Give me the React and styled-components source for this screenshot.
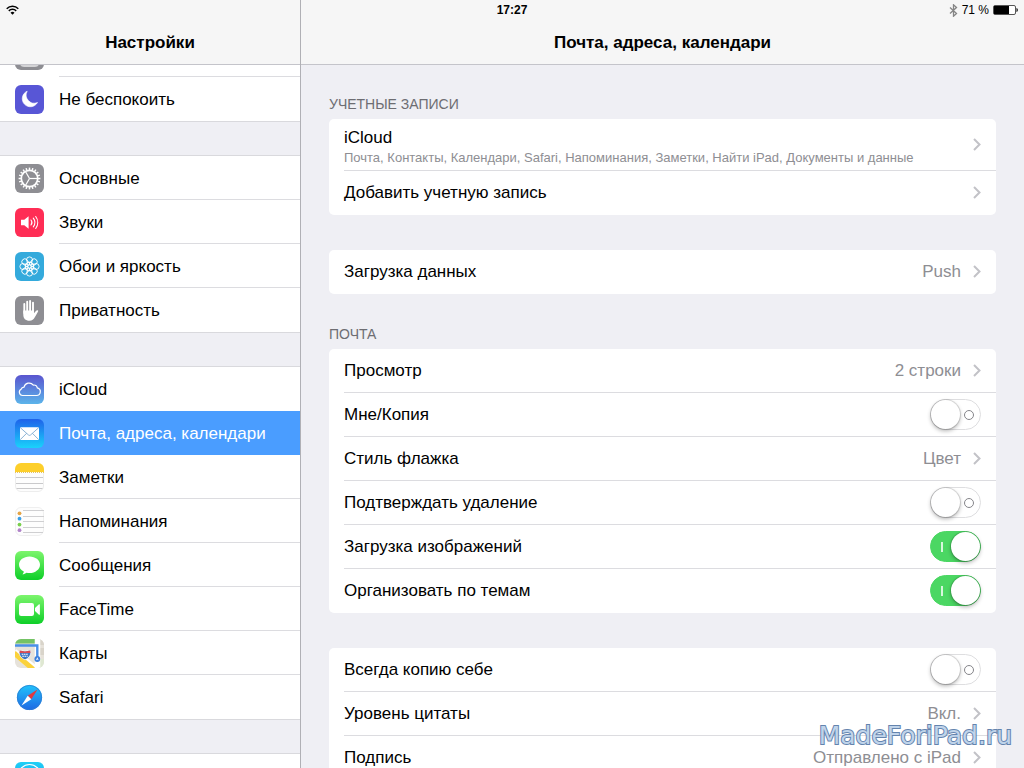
import React, { useId, useState } from "react";
import styled, { createGlobalStyle, css } from "styled-components";

const GlobalStyle = createGlobalStyle`
  *,
  *::before,
  *::after {
    box-sizing: border-box;
  }

  html,
  body,
  #root {
    height: 100%;
    margin: 0;
  }

  body {
    overflow: hidden;
    background: #efeff4;
    color: #000;
    font-family: "Liberation Sans", Arial, sans-serif;
    font-size: 17px;
    line-height: 20px;
  }

  ul {
    margin: 0;
    padding: 0;
    list-style: none;
  }
`;

const Screen = styled.div`
  position: relative;
  display: flex;
  height: 100%;
  overflow: hidden;
`;

/* ---------- status bar ---------- */

const StatusBar = styled.div`
  position: absolute;
  top: 0;
  right: 0;
  left: 0;
  z-index: 3;
  display: grid;
  grid-template-columns: 1fr auto 1fr;
  align-items: center;
  height: 20px;
  padding: 0 6px;
  font-size: 12px;
  line-height: 20px;
`;

const Clock = styled.time`
  font-weight: bold;
`;

const StatusRight = styled.div`
  display: flex;
  align-items: center;
  justify-content: flex-end;
  gap: 4px;
`;

/* ---------- panes ---------- */

const Pane = styled.section`
  display: flex;
  flex-direction: column;
  min-width: 0;
  ${(p) =>
    p.$side
      ? css`
          flex: 0 0 301px;
          border-right: 1px solid #b0b0b5;
        `
      : css`
          flex: 1;
        `}
`;

const TitleBar = styled.header`
  position: relative;
  z-index: 2;
  flex: none;
  padding: 33px 0 11px;
  background: #f6f6f6;
  border-bottom: 1px solid #c4c4ca;
`;

const Title = styled.h1`
  margin: 0;
  font-size: 17px;
  line-height: 20px;
  text-align: center;
`;

const Scroller = styled.div`
  flex: 1;
  min-height: 0;
  overflow: hidden;
`;

/* ---------- sidebar ---------- */

const Nav = styled.nav`
  display: flex;
  flex-direction: column;
  gap: 35px;
  margin-top: -32px;
`;

const NavGroup = styled.ul`
  background: #fff;
  box-shadow: 0 -1px #d9d9dd, 0 1px #d9d9dd;
`;

const NavLabel = styled.span`
  flex: 1;
  display: flex;
  align-items: center;
  height: 44px;
  padding-top: 2px;
  border-bottom: 1px solid ${(p) => (p.$line ? "#dcdce0" : "transparent")};
`;

const NavLink = styled.a`
  display: flex;
  align-items: center;
  gap: 15px;
  height: 44px;
  padding-left: 15px;
  background: ${(p) => (p.$active ? "#4a9dff" : "transparent")};
  color: ${(p) => (p.$active ? "#fff" : "#000")};
  text-decoration: none;
`;

const AppIcon = styled.svg`
  flex: none;
  display: block;
  width: 29px;
  height: 29px;
`;

/* ---------- settings ---------- */

const Settings = styled.main`
  display: flex;
  flex-direction: column;
  gap: 35px;
  padding: 30px 28px 0;
`;

const Caption = styled.h2`
  margin: 0 0 6px;
  color: #6d6d72;
  font-size: 14px;
  font-weight: normal;
  line-height: 18px;
  text-transform: uppercase;

  section + section > & {
    margin-top: -4px;
  }
`;

const Card = styled.ul`
  background: #fff;
  border-radius: 5px;
`;

const Row = styled.li`
  padding-left: 15px;
`;

const rowBody = css`
  display: flex;
  align-items: center;
  gap: 12px;
  width: 100%;
  height: ${(p) => (p.$tall ? 52 : 44)}px;
  padding: 0 15px 0 0;
  border: 0;
  border-bottom: 1px solid #dcdce0;
  background: none;
  color: inherit;
  font: inherit;
  text-align: left;

  ${Row}:last-child > & {
    border-bottom-color: transparent;
  }
`;

const RowButton = styled.button`
  ${rowBody}
`;

const RowLabel = styled.label`
  ${rowBody}
`;

const RowText = styled.span`
  flex: 1;
  min-width: 0;
`;

const Detail = styled.span`
  display: block;
  color: #8e8e93;
  font-size: 13px;
`;

const TwoLines = styled(RowText)`
  padding-top: 6px;
`;

const Value = styled.span`
  color: #8e8e93;
`;

const Chevron = styled.svg`
  flex: none;
  width: 8px;
  height: 13px;
`;

const Switch = styled.input`
  position: relative;
  flex: none;
  appearance: none;
  width: 51px;
  height: 31px;
  margin: 0;
  border: 1px solid #dedee0;
  border-radius: 16px;
  background: #fff;

  &::before {
    content: "";
    position: absolute;
    top: 10px;
    right: 6px;
    width: 10px;
    height: 10px;
    border: 1px solid #85858a;
    border-radius: 50%;
  }

  &::after {
    content: "";
    position: absolute;
    top: 0;
    left: 0;
    width: 29px;
    height: 29px;
    border-radius: 50%;
    background: #fff;
    box-shadow: 0 0 0 1px rgba(0, 0, 0, 0.12), 0 2px 4px rgba(0, 0, 0, 0.3);
  }

  &:checked {
    border-color: #4bd763;
    background: #4bd763;
  }

  &:checked::before {
    right: auto;
    left: 10px;
    width: 2px;
    border: 0;
    border-radius: 0;
    background: #d8f7dd;
  }

  &:checked::after {
    right: 0;
    left: auto;
  }
`;

const Watermark = styled.div`
  position: absolute;
  right: 12px;
  bottom: 18px;
  z-index: 4;
  color: #c0d4ea;
  font-family: "DejaVu Sans", sans-serif;
  font-size: 25px;
  line-height: 28px;
  -webkit-text-stroke: 2px #6484ae;
  paint-order: stroke fill;
  pointer-events: none;
`;

/* ---------- icons ---------- */

const around = (n) => Array.from({ length: n }, (_, i) => (i * 360) / n);

function Tile({ from, to = from, children }) {
  const id = useId();
  return (
    <AppIcon viewBox="0 0 29 29" aria-hidden="true">
      <linearGradient id={id} x1="0" y1="0" x2="0" y2="1">
        <stop stopColor={from} />
        <stop offset="1" stopColor={to} />
      </linearGradient>
      <rect width="29" height="29" rx="6" fill={`url(#${id})`} />
      {children}
    </AppIcon>
  );
}

const ControlIcon = () => (
  <Tile from="#8e8e93">
    <rect x="5" y="18" width="19" height="8" rx="4" fill="#d4d4d6" />
  </Tile>
);

const MoonIcon = () => (
  <Tile from="#5856d6">
    <path d="M12.200 6.200a8.100 8.100 0 1 0 10.300 11.300A8.100 8.100 0 0 1 12.200 6.200Z" fill="#fff" stroke="#fff" strokeWidth=".6" strokeLinejoin="round" />
  </Tile>
);

const GearIcon = () => (
  <Tile from="#8e8e93">
    <g stroke="#fff" fill="none">
      <circle cx="14.5" cy="14.5" r="8.200" strokeWidth="1.700" />
      {around(20).map((a) => (
        <path key={a} d="M14.5 3.600v2.400" strokeWidth="1.500" transform={`rotate(${a} 14.5 14.5)`} />
      ))}
      {around(3).map((a) => (
        <path key={a} d="M14.500 14.500h8" strokeWidth="1.200" transform={`rotate(${a} 14.5 14.5)`} />
      ))}
    </g>
  </Tile>
);

const SoundIcon = () => (
  <Tile from="#ff2d55">
    <path d="M6 11.700h3.300l4.300-3.500v12.600l-4.300-3.500H6Z" fill="#fff" />
    <g stroke="#fff" strokeWidth="1.100" fill="none" strokeLinecap="round">
      <path d="M16 12a4 4 0 0 1 0 5" />
      <path d="M18.300 10.200a7 7 0 0 1 0 8.600" />
      <path d="M20.700 8.500a10 10 0 0 1 0 12" />
    </g>
  </Tile>
);

const FlowerIcon = () => (
  <Tile from="#34aadc">
    <g stroke="#fff" strokeWidth=".9" fill="none">
      {around(8).map((a) => (
        <circle key={a} cx="14.500" cy="7.900" r="3" transform={`rotate(${a} 14.5 14.5)`} />
      ))}
      {around(8).map((a) => (
        <circle key={a} cx="14.500" cy="11.300" r="1.500" transform={`rotate(${a + 22.5} 14.5 14.5)`} />
      ))}
      <circle cx="14.500" cy="14.500" r="1.600" />
    </g>
  </Tile>
);

const HandIcon = () => (
  <Tile from="#8e8e93">
    <g stroke="#fff" strokeWidth="1.900" strokeLinecap="round">
      <path d="M9.300 8v9M12.200 5.700v11M15.100 5v11M18 6.600v10" />
    </g>
    <path
      d="M8.300 14.500h10.700v2.700l1.900-2.300c.8-.9 2.400-.7 2.300.1-.7 1.700-2.200 4.400-3.400 6.300-1.200 2.200-2.600 3.500-5.300 3.500-4 0-6.200-2.300-6.200-6Z"
      fill="#fff"
    />
  </Tile>
);

const CloudIcon = () => (
  <Tile from="#5a55cf" to="#5cb4ea">
    <path
      d="M7.500 20.500h14a3.900 3.900 0 0 0 .8-7.700 3.300 3.300 0 0 0-4-2.700 5.300 5.300 0 0 0-9.300 2 3 3 0 0 0-2.900 2.200 3.300 3.300 0 0 0 1.400 6.200Z"
      fill="none"
      stroke="#fff"
      strokeWidth="1.200"
    />
  </Tile>
);

const MailIcon = () => (
  <Tile from="#1e62ea" to="#1ad2fb">
    <rect x="5" y="8.300" width="19" height="12.600" rx="1" fill="#fff" />
    <path
      d="m5.300 8.700 8.200 7.300q1 .8 2 0l8.200-7.300M5.400 20.500l6.200-6.200M23.600 20.500l-6.200-6.200"
      fill="none"
      stroke="#6d9fca"
      strokeWidth=".8"
    />
  </Tile>
);

const NotesIcon = () => (
  <Tile from="#fdfdfd">
    <path d="M0 9V6a6 6 0 0 1 6-6h17a6 6 0 0 1 6 6v3Z" fill="#fdcf2b" />
    <path d="M0 9.500h29" stroke="#d9b23a" strokeWidth=".8" strokeDasharray="1 1" />
    <path d="M0 14.500h29M0 20.500h29M1 25.500h27" stroke="#c9c9cb" />
    <path d="M.5 10v13a5.500 5.500 0 0 0 5.500 5.500h17a5.500 5.500 0 0 0 5.500-5.500V10" fill="none" stroke="#ededed" />
  </Tile>
);

const RemindersIcon = () => (
  <Tile from="#fdfdfd">
    <rect x=".5" y=".5" width="28" height="28" rx="5.500" fill="none" stroke="#efefef" />
    <path d="M8 3.500h21M8 9.500h21M8 14.500h21M8 20.500h21M8 25.500h20" stroke="#cfcfd1" />
    <circle cx="4.500" cy="6.300" r="1.900" fill="#e5a446" />
    <circle cx="4.500" cy="11.700" r="1.900" fill="#3a9fe8" />
    <circle cx="4.500" cy="17.600" r="1.900" fill="#79cf4c" />
    <circle cx="4.500" cy="23.200" r="1.900" fill="#b083c9" />
  </Tile>
);

const MessagesIcon = () => (
  <Tile from="#7df56d" to="#0ecf28">
    <path
      d="M14.500 5.500c5.800 0 10.500 3.600 10.500 8.200s-4.700 8.300-10.500 8.300c-1 0-2-.1-3-.3-1 .9-2.500 1.500-4.200 1.500.9-.7 1.500-1.600 1.500-2.700C5.900 19 4 16.500 4 13.700c0-4.600 4.700-8.200 10.500-8.200Z"
      fill="#fff"
    />
  </Tile>
);

const FaceTimeIcon = () => (
  <Tile from="#7df56d" to="#0ecf28">
    <rect x="4" y="8" width="15" height="13" rx="2.200" fill="#fff" />
    <path d="m20 13 4-3.700c.4-.3.900-.1.900.4v9.600c0 .5-.5.700-.9.400L20 16Z" fill="#fff" />
  </Tile>
);

const MapsIcon = () => (
  <AppIcon viewBox="0 0 29 29" aria-hidden="true">
    <clipPath id="map-clip">
      <rect width="29" height="29" rx="6" />
    </clipPath>
    <g clipPath="url(#map-clip)">
      <rect width="29" height="29" fill="#e6e2da" />
      <path d="M0 0h20v4.500H0Z" fill="#74c365" />
      <path d="M25 0h4v6h-4ZM25 9h4v7h-4Z" fill="#d9d4ca" />
      <path d="M25 20h4v9h-5Z" fill="#dfe8d2" />
      <path d="M-1 13 20 30" stroke="#fff" strokeWidth="7" />
      <path d="M-1 14 19 31" stroke="#fbd23c" strokeWidth="5" />
      <path d="M22.500 0v29" stroke="#fff" strokeWidth="5.500" />
      <path d="M0 6.500h22.300V18" fill="none" stroke="#4a90e8" strokeWidth="2.400" />
      <circle cx="22.300" cy="20" r="2.900" fill="#3b7fdc" />
      <path d="m22.300 18.200 1.400 3.100-1.400-.7-1.400.7Z" fill="#fff" />
      <path d="M4.800 11.500q5.200 1.600 10.400 0c1.600 4-1 7.500-5.200 9.300-4.200-1.800-6.800-5.300-5.200-9.300Z" fill="#3c76c4" stroke="#fff" strokeWidth=".7" />
      <path d="M4.800 11.600q5.200 1.600 10.400 0l.3 2.300h-11Z" fill="#d84a52" />
      <path d="M6.700 15.200h6.600M7.300 17.200h5.400" stroke="#fff" strokeWidth="1.100" strokeDasharray="1.600 .6" />
    </g>
  </AppIcon>
);

const SafariIcon = () => (
  <AppIcon viewBox="0 0 29 29" aria-hidden="true">
    <linearGradient id="safari-sky" x1="0" y1="0" x2="0" y2="1">
      <stop stopColor="#20c4fb" />
      <stop offset="1" stopColor="#1f68e4" />
    </linearGradient>
    <circle cx="14.500" cy="14.500" r="12.600" fill="url(#safari-sky)" />
    <circle cx="14.500" cy="14.500" r="12.100" fill="none" stroke="#2f7fd0" strokeWidth=".8" />
    <path d="M22.500 6.500 12.700 12.700l3.600 3.600Z" fill="#e2383f" />
    <path d="M6.500 22.500 12.700 12.700l3.600 3.600Z" fill="#fff" />
  </AppIcon>
);

const StoreIcon = () => (
  <Tile from="#1fd0f5" to="#1d8df0">
    <circle cx="14.500" cy="13.500" r="11" fill="none" stroke="#fff" strokeWidth="1.200" />
  </Tile>
);

const WifiIcon = () => (
  <svg width="13" height="10" viewBox="0 0 13 10" role="img" aria-label="Wi-Fi">
    <g fill="none" stroke="#000" strokeWidth="1.500">
      <path d="M.7 3.700a8.300 8.300 0 0 1 11.600 0" />
      <path d="M2.800 5.900a5.200 5.200 0 0 1 7.400 0" />
    </g>
    <path d="M4.500 7.700a2.900 2.900 0 0 1 4 0l-2 2Z" />
  </svg>
);

const BluetoothIcon = () => (
  <svg width="9" height="13" viewBox="0 0 9 13" role="img" aria-label="Bluetooth">
    <path
      d="m1 3.500 6.500 6-3 2.700V.8l3 2.700-6.500 6"
      fill="none"
      stroke="#858585"
      strokeWidth="1.300"
    />
  </svg>
);

const BatteryIcon = () => (
  <svg width="25" height="10" viewBox="0 0 25 10" aria-hidden="true">
    <rect x=".5" y=".5" width="22" height="9" rx="1.500" fill="#fff" stroke="#555" />
    <rect x="1" y="1" width="15" height="8" />
    <path d="M23.500 3c1.700.6 1.700 3.400 0 4Z" />
  </svg>
);

/* ---------- data ---------- */

// the first group is scrolled half under the title bar
const navGroups = [
  [
    { label: "", Icon: ControlIcon },
    { label: "Не беспокоить", Icon: MoonIcon },
  ],
  [
    { label: "Основные", Icon: GearIcon },
    { label: "Звуки", Icon: SoundIcon },
    { label: "Обои и яркость", Icon: FlowerIcon },
    { label: "Приватность", Icon: HandIcon },
  ],
  [
    { label: "iCloud", Icon: CloudIcon },
    { label: "Почта, адреса, календари", Icon: MailIcon, active: true },
    { label: "Заметки", Icon: NotesIcon },
    { label: "Напоминания", Icon: RemindersIcon },
    { label: "Сообщения", Icon: MessagesIcon },
    { label: "FaceTime", Icon: FaceTimeIcon },
    { label: "Карты", Icon: MapsIcon },
    { label: "Safari", Icon: SafariIcon },
  ],
  [{ label: "", Icon: StoreIcon }],
];

const sections = [
  {
    title: "Учетные записи",
    rows: [
      {
        label: "iCloud",
        detail:
          "Почта, Контакты, Календари, Safari, Напоминания, Заметки, Найти iPad, Документы и данные",
      },
      { label: "Добавить учетную запись" },
    ],
  },
  { rows: [{ label: "Загрузка данных", value: "Push" }] },
  {
    title: "Почта",
    rows: [
      { label: "Просмотр", value: "2 строки" },
      { label: "Мне/Копия", on: false },
      { label: "Стиль флажка", value: "Цвет" },
      { label: "Подтверждать удаление", on: false },
      { label: "Загрузка изображений", on: true },
      { label: "Организовать по темам", on: true },
    ],
  },
  {
    rows: [
      { label: "Всегда копию себе", on: false },
      { label: "Уровень цитаты", value: "Вкл." },
      { label: "Подпись", value: "Отправлено с iPad" },
    ],
  },
];

function SwitchRow({ label, on }) {
  const id = useId();
  const [checked, setChecked] = useState(on);
  return (
    <RowLabel htmlFor={id}>
      <RowText>{label}</RowText>
      <Switch
        id={id}
        type="checkbox"
        checked={checked}
        onChange={(e) => setChecked(e.target.checked)}
      />
    </RowLabel>
  );
}

function LinkRow({ label, detail, value }) {
  return (
    <RowButton type="button" $tall={!!detail}>
      {detail ? (
        <TwoLines>
          {label}
          <Detail>{detail}</Detail>
        </TwoLines>
      ) : (
        <RowText>{label}</RowText>
      )}
      {value && <Value>{value}</Value>}
      <Chevron viewBox="0 0 8 13" aria-hidden="true">
        <path d="m1 1 5.500 5.500L1 12" fill="none" stroke="#c2c2c7" strokeWidth="2" />
      </Chevron>
    </RowButton>
  );
}

export default function App() {
  return (
    <>
      <GlobalStyle />
      <Screen>
        <StatusBar>
          <WifiIcon />
          <Clock>17:27</Clock>
          <StatusRight>
            <BluetoothIcon />
            <span>71 %</span>
            <BatteryIcon />
          </StatusRight>
        </StatusBar>

        <Pane $side>
          <TitleBar>
            <Title>Настройки</Title>
          </TitleBar>
          <Scroller>
            <Nav>
              {navGroups.map((group, g) => (
                <NavGroup key={g}>
                  {group.map(({ label, Icon, active }, i) => (
                    <li key={label}>
                      <NavLink
                        href="#"
                        $active={active}
                        aria-current={active ? "page" : undefined}
                      >
                        <Icon />
                        <NavLabel
                          $line={i < group.length - 1 && !active && !group[i + 1].active}
                        >
                          {label}
                        </NavLabel>
                      </NavLink>
                    </li>
                  ))}
                </NavGroup>
              ))}
            </Nav>
          </Scroller>
        </Pane>

        <Pane>
          <TitleBar>
            <Title>Почта, адреса, календари</Title>
          </TitleBar>
          <Scroller>
            <Settings>
              {sections.map(({ title, rows }, s) => (
                <section key={s}>
                  {title && <Caption>{title}</Caption>}
                  <Card>
                    {rows.map((row) => (
                      <Row key={row.label}>
                        {"on" in row ? <SwitchRow {...row} /> : <LinkRow {...row} />}
                      </Row>
                    ))}
                  </Card>
                </section>
              ))}
            </Settings>
          </Scroller>
        </Pane>

        <Watermark>MadeForiPad.ru</Watermark>
      </Screen>
    </>
  );
}
